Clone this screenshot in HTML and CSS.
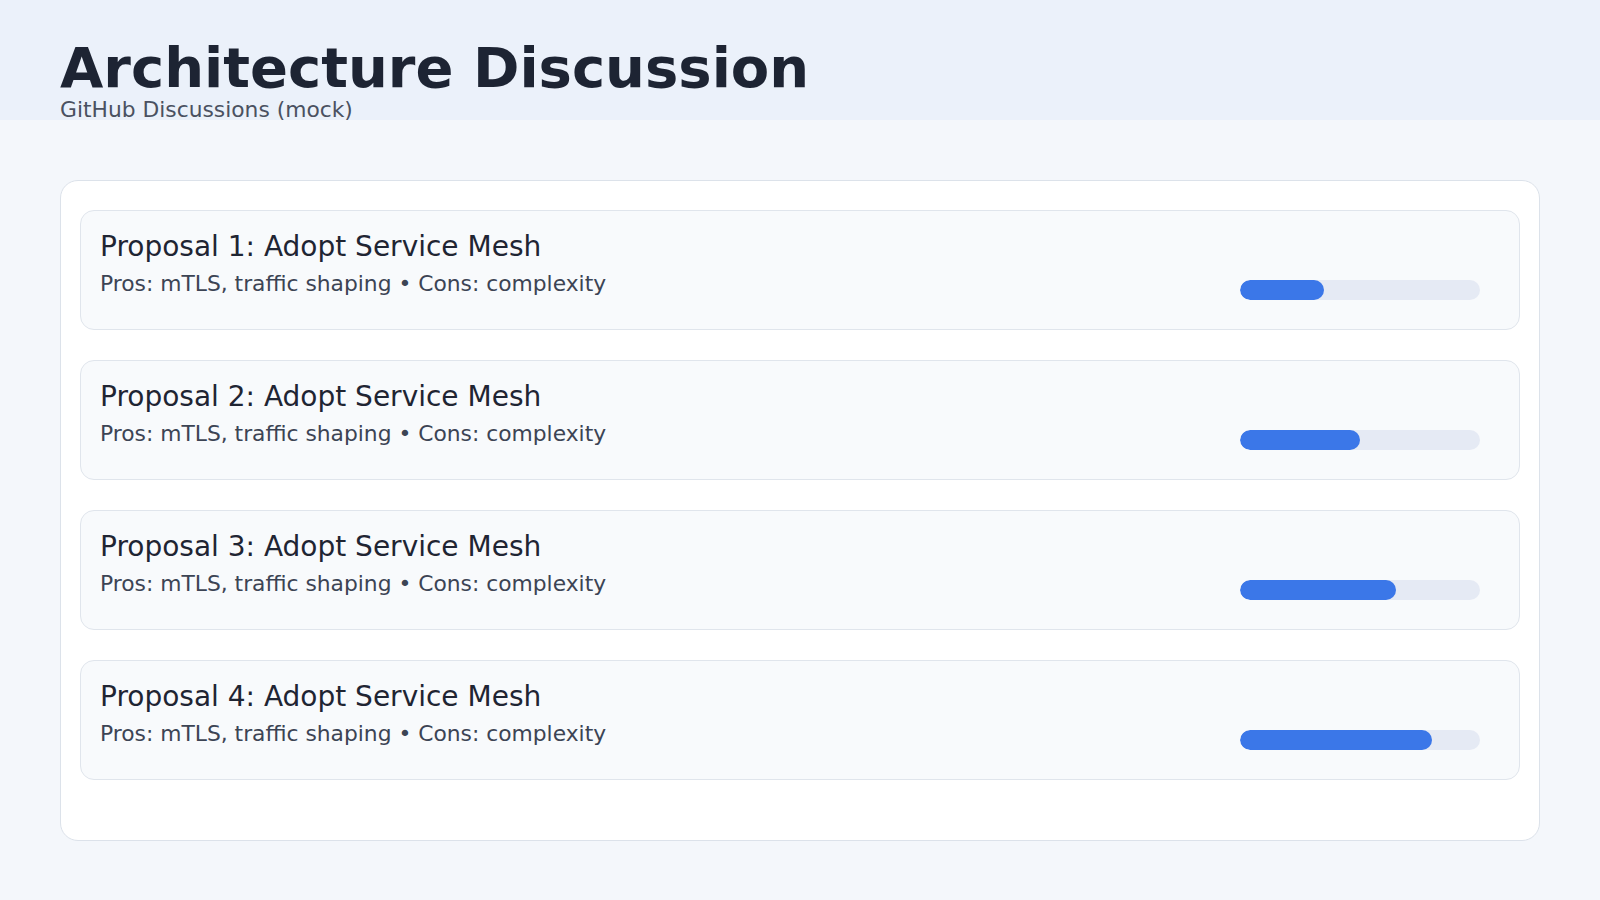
FILE: index.html
```html
<!DOCTYPE html>
<html lang="en">
<head>
<meta charset="utf-8">
<title>Architecture Discussion</title>
<link rel="stylesheet" href="styles.css">
</head>
<body>
<header class="header">
  <h1 class="title">Architecture Discussion</h1>
  <div class="subtitle">GitHub Discussions (mock)</div>
</header>
<main class="card">
  <div class="item">
    <div class="text">
      <div class="item-title">Proposal 1: Adopt Service Mesh</div>
      <div class="item-sub">Pros: mTLS, traffic shaping • Cons: complexity</div>
    </div>
    <div class="track"><div class="fill" style="width:35%"></div></div>
  </div>
  <div class="item">
    <div class="text">
      <div class="item-title">Proposal 2: Adopt Service Mesh</div>
      <div class="item-sub">Pros: mTLS, traffic shaping • Cons: complexity</div>
    </div>
    <div class="track"><div class="fill" style="width:50%"></div></div>
  </div>
  <div class="item">
    <div class="text">
      <div class="item-title">Proposal 3: Adopt Service Mesh</div>
      <div class="item-sub">Pros: mTLS, traffic shaping • Cons: complexity</div>
    </div>
    <div class="track"><div class="fill" style="width:65%"></div></div>
  </div>
  <div class="item">
    <div class="text">
      <div class="item-title">Proposal 4: Adopt Service Mesh</div>
      <div class="item-sub">Pros: mTLS, traffic shaping • Cons: complexity</div>
    </div>
    <div class="track"><div class="fill" style="width:80%"></div></div>
  </div>
</main>
</body>
</html>
```

FILE: styles.css
```css
* { box-sizing: border-box; }
html, body { margin: 0; padding: 0; }
body {
  background: #f4f7fb;
  font-family: "DejaVu Sans", sans-serif;
  width: 1600px;
  height: 900px;
  overflow: hidden;
}
.header {
  height: 120px;
  background: #ebf1fa;
  padding: 42px 60px 0;
}
.title {
  margin: 0;
  font-size: 56px;
  line-height: 52px;
  font-weight: bold;
  color: #1d2433;
}
.subtitle {
  margin-top: 5px;
  font-size: 21.8px;
  line-height: 22px;
  color: #4a5161;
}
.card {
  margin: 60px 60px 0;
  height: 661px;
  background: #ffffff;
  border: 1px solid #dce2ea;
  border-radius: 18px;
  padding: 29px 19px;
  display: flex;
  flex-direction: column;
  gap: 30px;
}
.item {
  height: 120px;
  background: #f8fafc;
  border: 1px solid #e0e5ec;
  border-radius: 14px;
  padding: 19px 39px 19px 19px;
  display: flex;
  justify-content: space-between;
  align-items: flex-start;
}
.item-title {
  font-size: 28px;
  color: #1f2533;
}
.item-sub {
  margin-top: 8px;
  font-size: 21.8px;
  color: #3c4454;
}
.track {
  margin-top: 50px;
  width: 240px;
  height: 20px;
  border-radius: 10px;
  background: #e5eaf4;
  overflow: hidden;
}
.fill {
  height: 100%;
  border-radius: 10px;
  background: #3b77e8;
}
```
